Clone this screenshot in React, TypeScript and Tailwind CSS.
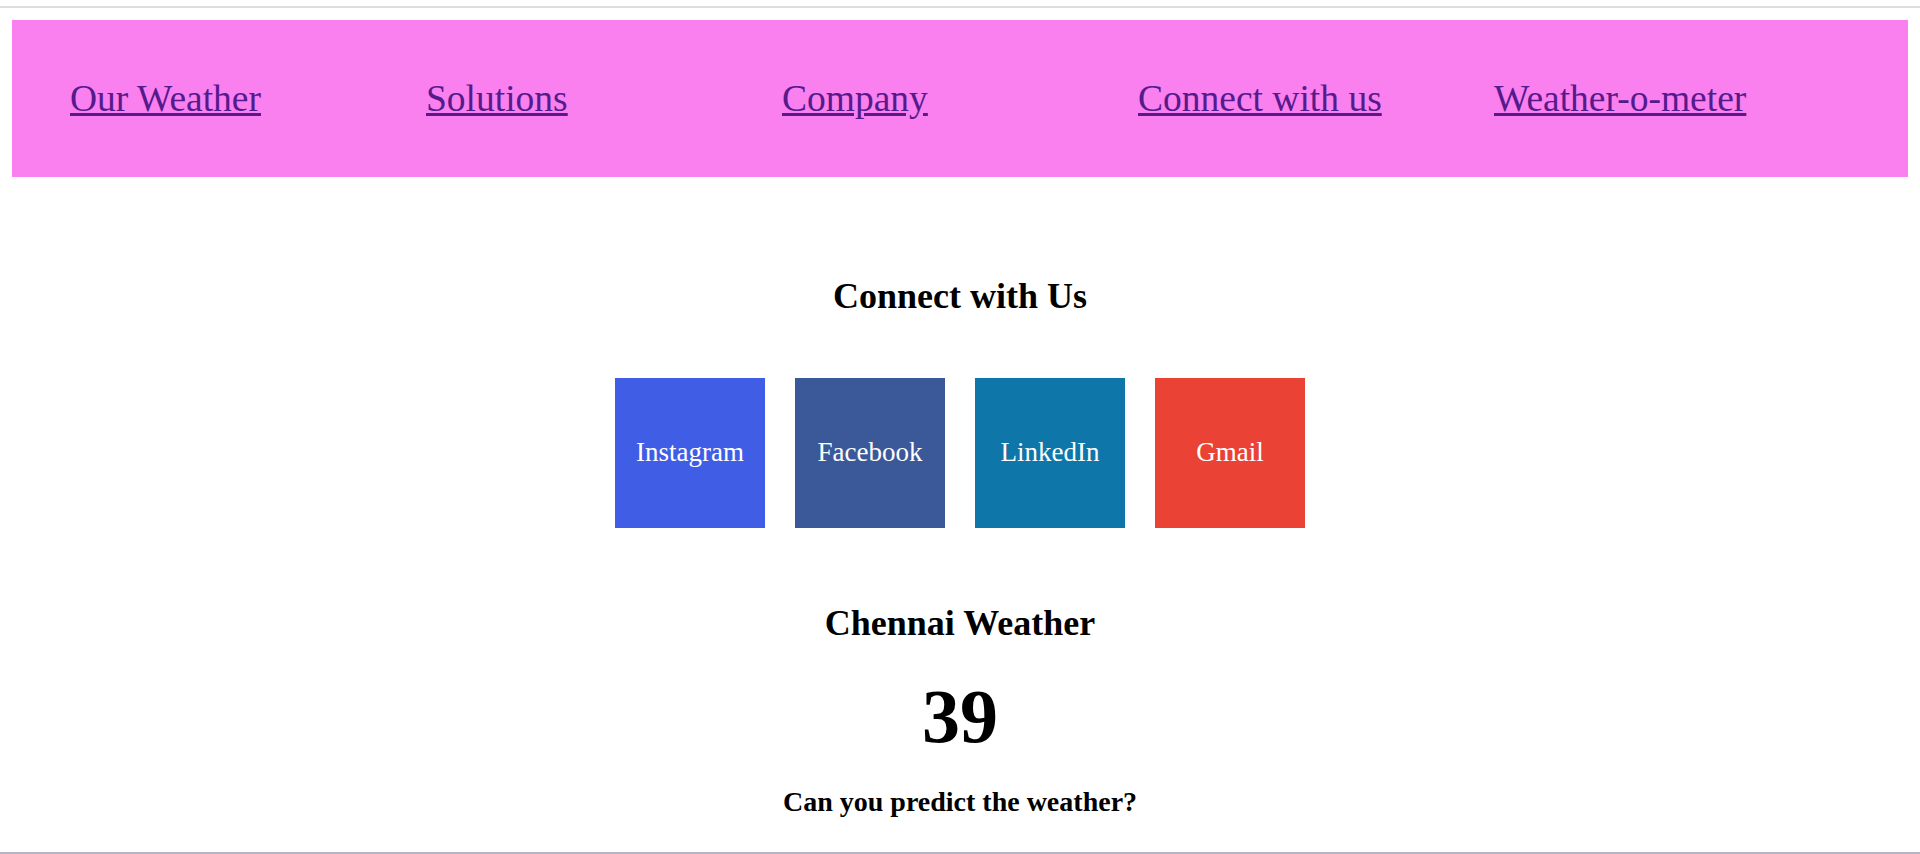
const links = ["Our Weather", "Solutions", "Company", "Connect with us", "Weather-o-meter"];

const socials = [
  { name: "Instagram", cls: "bg-[#405de6]" },
  { name: "Facebook", cls: "bg-[#3b5998]" },
  { name: "LinkedIn", cls: "bg-[#0e76a8]" },
  { name: "Gmail", cls: "bg-[#ea4335]" },
];

export default function App() {
  return (
    <div className="min-h-screen bg-white text-black font-['Liberation_Serif','Times_New_Roman',serif] flex flex-col">
      <div className="h-[6px]" />
      <div className="h-[2px] bg-[#dddddd]" />

      <nav className="mx-[12px] mt-[12px] h-[157px] bg-[#fa7fef] flex items-center">
        <ul className="flex pl-[58px]">
          {links.map((l) => (
            <li key={l} className="w-[356px]">
              <a href="#" className="text-[37.5px] leading-[42px] text-[#551a8b] underline">
                {l}
              </a>
            </li>
          ))}
        </ul>
      </nav>

      <h2 className="mt-[99px] text-center text-[36px] leading-[41px] font-bold">Connect with Us</h2>

      <div className="mt-[61px] flex justify-center gap-[30px]">
        {socials.map((s) => (
          <a
            key={s.name}
            href="#"
            className={`w-[150px] h-[150px] flex items-center justify-center text-white text-[27px] pb-[2px] ${s.cls}`}
          >
            {s.name}
          </a>
        ))}
      </div>

      <h2 className="mt-[75px] text-center text-[36px] leading-[41px] font-bold">Chennai Weather</h2>
      <div className="mt-[29px] text-center text-[76px] leading-[87px] font-bold">39</div>
      <h3 className="mt-[26px] text-center text-[28px] leading-[32px] font-bold">Can you predict the weather?</h3>

      <div className="mt-auto h-[2px] bg-[#b8b4c8]" />
    </div>
  );
}
